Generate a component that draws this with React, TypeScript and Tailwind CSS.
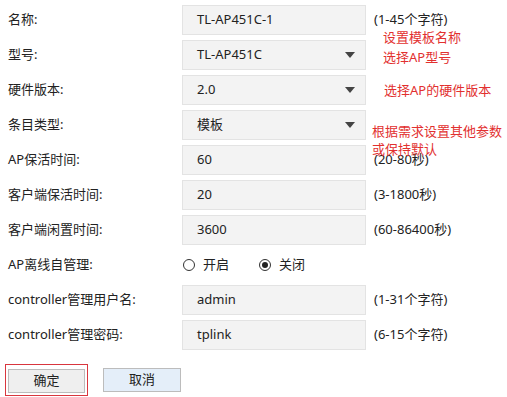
import React from "react";

const font = { fontFamily: '"Noto Sans", "Noto Sans CJK SC", sans-serif' };

type Row =
  | { label: string; kind: "text"; value: string; hint?: string }
  | { label: string; kind: "select"; value: string; hint?: string }
  | { label: string; kind: "radio"; hint?: string };

const rows: Row[] = [
  { label: "名称:", kind: "text", value: "TL-AP451C-1", hint: "(1-45个字符)" },
  { label: "型号:", kind: "select", value: "TL-AP451C" },
  { label: "硬件版本:", kind: "select", value: "2.0" },
  { label: "条目类型:", kind: "select", value: "模板" },
  { label: "AP保活时间:", kind: "text", value: "60", hint: "(20-80秒)" },
  { label: "客户端保活时间:", kind: "text", value: "20", hint: "(3-1800秒)" },
  { label: "客户端闲置时间:", kind: "text", value: "3600", hint: "(60-86400秒)" },
  { label: "AP离线自管理:", kind: "radio" },
  { label: "controller管理用户名:", kind: "text", value: "admin", hint: "(1-31个字符)" },
  { label: "controller管理密码:", kind: "text", value: "tplink", hint: "(6-15个字符)" },
];

function Field({ row }: { row: Row }) {
  if (row.kind === "radio") {
    return (
      <div className="flex items-center pl-[1px] text-[13px] text-[#222]">
        <span className="h-[12px] w-[12px] rounded-full border-[1.5px] border-[#333]" />
        <span className="ml-[8px]">开启</span>
        <span className="ml-[30px] flex h-[12px] w-[12px] items-center justify-center rounded-full border-[1.5px] border-[#333]">
          <span className="h-[6px] w-[6px] rounded-full bg-[#222]" />
        </span>
        <span className="ml-[8px]">关闭</span>
      </div>
    );
  }
  return (
    <div className="flex h-[30px] w-[184px] items-center justify-between border border-[#e3e3e3] bg-[#f3f3f3] pl-[14px] pr-[10px] text-[13px] text-[#222]">
      <span>{row.value}</span>
      {row.kind === "select" && (
        <svg width="10" height="6" viewBox="0 0 10 6">
          <path d="M0 0h10L5 6z" fill="#444" />
        </svg>
      )}
    </div>
  );
}

export default function App() {
  return (
    <div className="relative h-[397px] w-[507px] bg-white" style={font}>
      <div className="pt-[2px]">
        {rows.map((r) => (
          <div key={r.label} className="flex h-[35px] items-center">
            <div className="w-[182px] pl-[8px] text-[13px] text-[#222]">{r.label}</div>
            <Field row={r} />
            {r.hint && <div className="ml-[8px] text-[13px] text-[#222]">{r.hint}</div>}
          </div>
        ))}
      </div>

      <div className="mt-[12px] flex items-center pl-[5px]">
        <div className="border border-[#d9363e] p-[2px]">
          <button className="h-[24px] w-[77px] border border-[#bcbcbc] bg-[#efefef] text-[13px] text-[#222]">
            确定
          </button>
        </div>
        <button className="ml-[15px] h-[24px] w-[78px] border border-[#bcbcbc] bg-[#e4eef9] text-[13px] text-[#222]">
          取消
        </button>
      </div>

      {/* red annotations */}
      <div className="pointer-events-none absolute left-0 top-0 text-[13px] leading-[18px] text-[#e2302f]">
        <div className="absolute left-[383px] top-[28px] whitespace-nowrap">设置模板名称</div>
        <div className="absolute left-[383px] top-[48px] whitespace-nowrap">选择AP型号</div>
        <div className="absolute left-[384px] top-[81px] whitespace-nowrap">选择AP的硬件版本</div>
        <div className="absolute left-[372px] top-[122px] whitespace-nowrap">根据需求设置其他参数</div>
        <div className="absolute left-[372px] top-[140px] whitespace-nowrap">或保持默认</div>
      </div>
    </div>
  );
}
